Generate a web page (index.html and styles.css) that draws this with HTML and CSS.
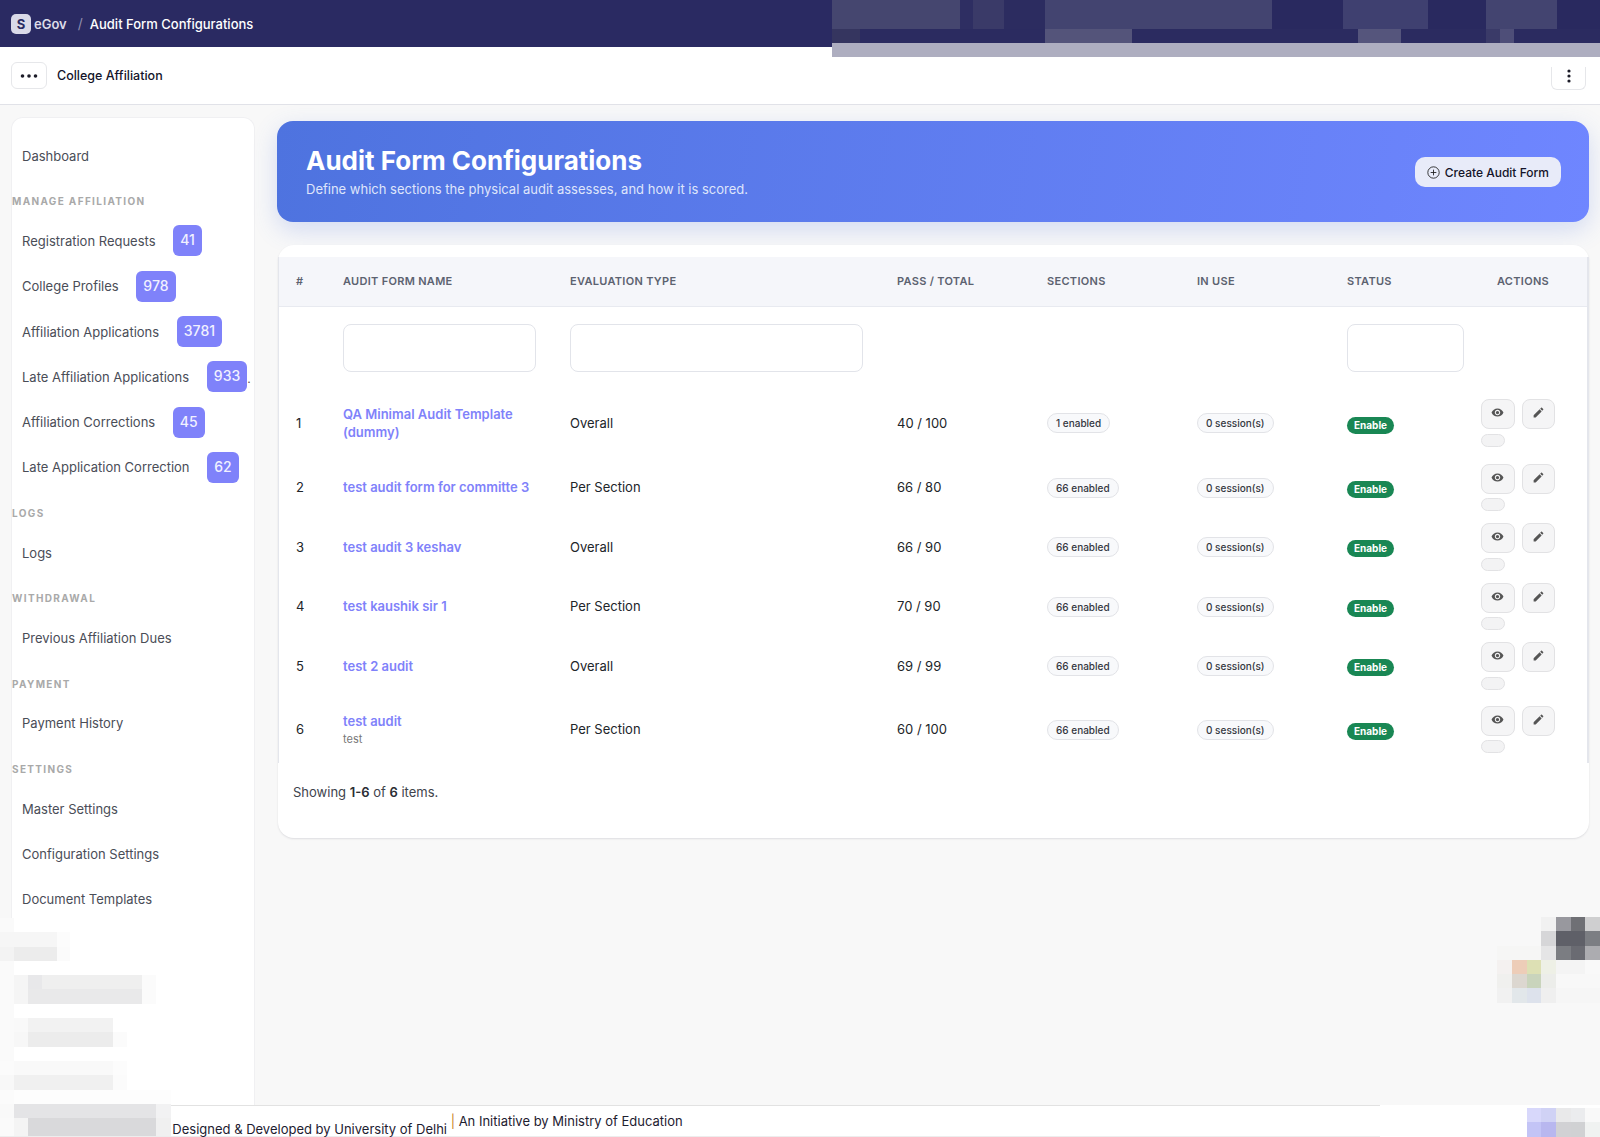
FILE: index.html
```html
<!doctype html>
<html lang="en">

<head>
<title>Audit Form Configurations</title>
<link rel="stylesheet" href="styles.css">
</head>

<body>

<svg class="icon-defs" width="0" height="0">
  <symbol id="icon-eye" viewBox="0 0 24 24"><path d="M12 4.5C7 4.5 2.73 7.61 1 12c1.73 4.39 6 7.5 11 7.5s9.27-3.11 11-7.5c-1.73-4.39-6-7.5-11-7.5zM12 17c-2.76 0-5-2.24-5-5s2.24-5 5-5 5 2.24 5 5-2.24 5-5 5zm0-8c-1.66 0-3 1.34-3 3s1.34 3 3 3 3-1.34 3-3-1.34-3-3-3z"/></symbol>
  <symbol id="icon-pencil" viewBox="0 0 24 24"><path d="M3 17.25V21h3.75L17.81 9.94l-3.75-3.75L3 17.25zM20.71 7.04c.39-.39.39-1.02 0-1.41l-2.34-2.34c-.39-.39-1.02-.39-1.41 0l-1.83 1.83 3.75 3.75 1.83-1.83z"/></symbol>
</svg>

<header class="topbar">
  <span class="logo">S</span>
  <span class="brand">eGov</span>
  <span class="crumb-sep">/</span>
  <span class="crumb">Audit Form Configurations</span>
</header>

<div class="subbar">
  <button class="dots-btn">
    <svg width="18" height="4" viewBox="0 0 18 4"><circle cx="2.5" cy="2" r="1.8"/><circle cx="9" cy="2" r="1.8"/><circle cx="15.5" cy="2" r="1.8"/></svg>
  </button>
  <span class="module-name">College Affiliation</span>
  <button class="kebab-btn">
    <svg width="4" height="14" viewBox="0 0 4 14"><circle cx="2" cy="2" r="1.6"/><circle cx="2" cy="7" r="1.6"/><circle cx="2" cy="12" r="1.6"/></svg>
  </button>
</div>

<div class="layout">
  <nav class="sidebar">
    <a class="nav-item">Dashboard</a>

    <div class="nav-label">MANAGE AFFILIATION</div>
    <a class="nav-item">Registration Requests <span class="nav-badge">41</span></a>
    <a class="nav-item">College Profiles <span class="nav-badge">978</span></a>
    <a class="nav-item">Affiliation Applications <span class="nav-badge">3781</span></a>
    <a class="nav-item">Late Affiliation Applications <span class="nav-badge">933</span><span class="nav-more">.</span></a>
    <a class="nav-item">Affiliation Corrections <span class="nav-badge">45</span></a>
    <a class="nav-item">Late Application Correction <span class="nav-badge">62</span></a>

    <div class="nav-label">LOGS</div>
    <a class="nav-item">Logs</a>

    <div class="nav-label">WITHDRAWAL</div>
    <a class="nav-item">Previous Affiliation Dues</a>

    <div class="nav-label">PAYMENT</div>
    <a class="nav-item">Payment History</a>

    <div class="nav-label">SETTINGS</div>
    <a class="nav-item">Master Settings</a>
    <a class="nav-item">Configuration Settings</a>
    <a class="nav-item">Document Templates</a>
  </nav>

  <main class="content">
    <section class="hero">
      <div>
        <h1>Audit Form Configurations</h1>
        <p>Define which sections the physical audit assesses, and how it is scored.</p>
      </div>
      <button class="create-btn">
        <svg width="13" height="13" viewBox="0 0 16 16" fill="none" stroke="#222" stroke-width="1.1"><circle cx="8" cy="8" r="7"/><path d="M8 4.5v7M4.5 8h7"/></svg>
        Create Audit Form
      </button>
    </section>

    <section class="card">
      <div class="table-wrap">
        <table class="forms">
          <colgroup>
            <col class="col-num"><col class="col-name"><col class="col-type">
            <col class="col-std"><col class="col-std"><col class="col-std">
            <col class="col-status"><col class="col-actions">
          </colgroup>
          <thead>
            <tr>
              <th>#</th>
              <th>Audit Form Name</th>
              <th>Evaluation Type</th>
              <th>Pass / Total</th>
              <th>Sections</th>
              <th>In Use</th>
              <th>Status</th>
              <th class="th-actions">Actions</th>
            </tr>
            <tr class="filters">
              <td></td>
              <td><input type="text"></td>
              <td><input type="text"></td>
              <td></td>
              <td></td>
              <td></td>
              <td class="filter-status"><input type="text"></td>
              <td></td>
            </tr>
          </thead>
          <tbody>
            <tr>
              <td>1</td>
              <td><a class="form-link">QA Minimal Audit Template (dummy)</a></td>
              <td>Overall</td>
              <td>40 / 100</td>
              <td><span class="pill">1 enabled</span></td>
              <td><span class="pill">0 session(s)</span></td>
              <td><span class="status">Enable</span></td>
              <td class="actions">
                <button class="act-btn"><svg><use href="#icon-eye"/></svg></button><button class="act-btn"><svg><use href="#icon-pencil"/></svg></button>
                <button class="act-toggle"></button>
              </td>
            </tr>
            <tr>
              <td>2</td>
              <td><a class="form-link">test audit form for committe 3</a></td>
              <td>Per Section</td>
              <td>66 / 80</td>
              <td><span class="pill">66 enabled</span></td>
              <td><span class="pill">0 session(s)</span></td>
              <td><span class="status">Enable</span></td>
              <td class="actions">
                <button class="act-btn"><svg><use href="#icon-eye"/></svg></button><button class="act-btn"><svg><use href="#icon-pencil"/></svg></button>
                <button class="act-toggle"></button>
              </td>
            </tr>
            <tr>
              <td>3</td>
              <td><a class="form-link">test audit 3 keshav</a></td>
              <td>Overall</td>
              <td>66 / 90</td>
              <td><span class="pill">66 enabled</span></td>
              <td><span class="pill">0 session(s)</span></td>
              <td><span class="status">Enable</span></td>
              <td class="actions">
                <button class="act-btn"><svg><use href="#icon-eye"/></svg></button><button class="act-btn"><svg><use href="#icon-pencil"/></svg></button>
                <button class="act-toggle"></button>
              </td>
            </tr>
            <tr>
              <td>4</td>
              <td><a class="form-link">test kaushik sir 1</a></td>
              <td>Per Section</td>
              <td>70 / 90</td>
              <td><span class="pill">66 enabled</span></td>
              <td><span class="pill">0 session(s)</span></td>
              <td><span class="status">Enable</span></td>
              <td class="actions">
                <button class="act-btn"><svg><use href="#icon-eye"/></svg></button><button class="act-btn"><svg><use href="#icon-pencil"/></svg></button>
                <button class="act-toggle"></button>
              </td>
            </tr>
            <tr>
              <td>5</td>
              <td><a class="form-link">test 2 audit</a></td>
              <td>Overall</td>
              <td>69 / 99</td>
              <td><span class="pill">66 enabled</span></td>
              <td><span class="pill">0 session(s)</span></td>
              <td><span class="status">Enable</span></td>
              <td class="actions">
                <button class="act-btn"><svg><use href="#icon-eye"/></svg></button><button class="act-btn"><svg><use href="#icon-pencil"/></svg></button>
                <button class="act-toggle"></button>
              </td>
            </tr>
            <tr>
              <td>6</td>
              <td><a class="form-link">test audit</a><div class="form-note">test</div></td>
              <td>Per Section</td>
              <td>60 / 100</td>
              <td><span class="pill">66 enabled</span></td>
              <td><span class="pill">0 session(s)</span></td>
              <td><span class="status">Enable</span></td>
              <td class="actions">
                <button class="act-btn"><svg><use href="#icon-eye"/></svg></button><button class="act-btn"><svg><use href="#icon-pencil"/></svg></button>
                <button class="act-toggle"></button>
              </td>
            </tr>
          </tbody>
        </table>
      </div>
      <div class="summary">Showing <b>1-6</b> of <b>6</b> items.</div>
    </section>
  </main>
</div>

<footer class="footer">
  Designed &amp; Developed by University of Delhi <span class="footer-sep">|</span> An Initiative by Ministry of Education
</footer>

<!-- pixelated patches lying over the page -->
<div class="patch patch-top">
  <div class="pr top-a"></div>
  <div class="pr top-a"></div>
  <div class="pr top-b"></div>
  <div class="pr top-c"></div>
</div>

<div class="patch patch-side">
  <div class="pr side-gap"></div>
  <div class="pr side-a"></div>
  <div class="pr side-b"></div>
  <div class="pr side-gap"></div>
  <div class="pr side-c"></div>
  <div class="pr side-d"></div>
  <div class="pr side-gap"></div>
  <div class="pr side-e"></div>
  <div class="pr side-f"></div>
  <div class="pr side-gap"></div>
  <div class="pr side-g"></div>
  <div class="pr side-h"></div>
  <div class="pr side-i"></div>
  <div class="pr side-j"></div>
  <div class="pr side-k"></div>
</div>

<div class="patch patch-float">
  <div class="pr float-a"></div>
  <div class="pr float-b"></div>
  <div class="pr float-c"></div>
  <div class="pr float-d"></div>
  <div class="pr float-e"></div>
  <div class="pr float-f"></div>
</div>

<div class="patch patch-corner">
  <div class="pr corner-a"></div>
  <div class="pr corner-b"></div>
</div>

</body>
</html>
```

FILE: styles.css
```css
* {
  box-sizing: border-box;
}

html, body {
  height: 1137px;
  overflow: hidden;
}

body {
  position: relative;
  display: flex;
  flex-direction: column;
  margin: 0;
  background-color: #f8f8f8;
  font-family: Inter, "Liberation Sans", sans-serif;
  font-size: 13px;
  color: #212529;
}

button {
  font: inherit;
  cursor: pointer;
}

.icon-defs {
  position: absolute;
}

/* top bar */
.topbar {
  display: flex;
  align-items: center;
  flex: none;
  height: 47px;
  padding-left: 11px;
  background-color: #2a2a62;
  color: #fff;
}

.logo {
  display: flex;
  align-items: center;
  justify-content: center;
  width: 20px;
  height: 20px;
  border-radius: 5px;
  background-color: #d9d9e8;
  color: #2a2a62;
  font-size: 13px;
  font-weight: 700;
}

.brand {
  margin-left: 3px;
  font-size: 13px;
  font-weight: 600;
  color: #dcdce8;
}

.crumb-sep {
  margin-left: 11px;
  color: #8f8fae;
  font-size: 14px;
}

.crumb {
  margin-left: 7px;
  font-size: 13px;
  font-weight: 500;
}

/* second bar */
.subbar {
  display: flex;
  align-items: center;
  flex: none;
  height: 58px;
  padding: 0 14px 0 11px;
  background-color: #fff;
  border-bottom: 1px solid #e1e2e8;
}

.dots-btn {
  display: flex;
  align-items: center;
  justify-content: center;
  width: 36px;
  height: 27px;
  padding: 0;
  background-color: #fff;
  border: 1px solid #e6e7ea;
  border-radius: 6px;
}

.dots-btn svg, .kebab-btn svg {
  fill: #1c1c28;
}

.module-name {
  margin-left: 10px;
  font-size: 12.5px;
  font-weight: 500;
  color: #14142a;
}

.kebab-btn {
  display: flex;
  justify-content: center;
  align-self: flex-end;
  width: 35px;
  height: 23px;
  margin-left: auto;
  margin-bottom: 14px;
  padding: 2px 0 0;
  background-color: #fff;
  border: 1px solid #e6e7ea;
  border-top: 0;
  border-radius: 0 0 6px 6px;
}

/* sidebar */
.layout {
  display: flex;
  flex: none;
  height: 1000px;
}

.sidebar {
  flex: none;
  width: 244px;
  margin: 12px 0 0 11px;
  padding-top: 15px;
  background-color: #fff;
  border: 1px solid #f0f0f2;
  border-bottom: 0;
  border-radius: 12px 12px 0 0;
}

.nav-item {
  display: flex;
  align-items: center;
  height: 45.3px;
  padding-left: 10px;
  font-size: 13px;
  color: #4a4d57;
  white-space: pre;
}

.nav-badge {
  height: 31px;
  margin-left: 14px;
  padding: 0 7px;
  border-radius: 6px;
  background-color: #7f82fa;
  color: #f1f1ff;
  font-size: 14px;
  font-weight: 500;
  line-height: 30px;
}

.nav-more {
  align-self: center;
  margin-top: 4px;
  font-size: 12px;
  color: #555;
}

.nav-label {
  height: 40px;
  padding-top: 15px;
  font-size: 10px;
  font-weight: 700;
  line-height: 16px;
  letter-spacing: 1.35px;
  color: #a9a9a9;
}

/* main column */
.content {
  flex: 1;
  min-width: 0;
  padding: 16px 11px 0 23px;
}

.hero {
  display: flex;
  align-items: center;
  justify-content: space-between;
  height: 101px;
  margin-left: -1px;
  padding: 0 28px 0 29px;
  border-radius: 16px;
  background: linear-gradient(100deg, #4e73df 0%, #6f86ff 100%);
  box-shadow: 0 8px 24px rgba(78, 115, 223, 0.22);
  color: #fff;
}

.hero h1 {
  margin: 0;
  font-size: 26px;
  font-weight: 700;
  line-height: 32px;
}

.hero p {
  margin: 3px 0 0;
  font-size: 13px;
  line-height: 18px;
  color: #dfe5fb;
}

.create-btn {
  display: flex;
  align-items: center;
  gap: 5px;
  height: 30px;
  margin-top: 1px;
  padding: 0 12px;
  border: 0;
  border-radius: 10px;
  background-color: #e8ebf9;
  color: #14142a;
  font-size: 12px;
  font-weight: 500;
}

.card {
  height: 593px;
  margin-top: 23px;
  padding-top: 12px;
  background-color: #fff;
  border-radius: 16px;
  box-shadow: 0 1px 2px rgba(30, 30, 60, 0.12);
}

.table-wrap {
  border-left: 1px solid #e4e6ec;
  border-right: 2px solid #e4e6ec;
}

/* table */
.forms {
  width: 100%;
  table-layout: fixed;
  border-collapse: collapse;
}

.col-num { width: 47px; }
.col-name { width: 227px; }
.col-type { width: 327px; }
.col-std { width: 150px; }
.col-status { width: 134px; }

.forms th {
  height: 49px;
  padding: 0 17px;
  background-color: #f5f6fa;
  border-bottom: 1px solid #e8eaf0;
  font-size: 11px;
  font-weight: 600;
  letter-spacing: 0.3px;
  text-align: left;
  text-transform: uppercase;
  color: #5c6270;
}

.forms .th-actions {
  padding-right: 38px;
  text-align: right;
}

.forms td {
  padding: 16px 17px;
  line-height: 18.6px;
  vertical-align: middle;
}

.forms .filters td {
  padding: 17px 17px;
}

.forms .filters .filter-status {
  padding-right: 0;
}

.filters input {
  display: block;
  width: 100%;
  height: 48px;
  background-color: #fff;
  border: 1px solid #e2e4ea;
  border-radius: 8px;
}

.form-link {
  font-weight: 600;
  color: #7f82fa;
}

.form-note {
  font-size: 11px;
  line-height: 15px;
  margin-top: 2px;
  color: #777;
}

.pill {
  display: inline-block;
  height: 20px;
  padding: 0 8px;
  border: 1px solid #e2e3e7;
  border-radius: 10px;
  background-color: #f8f9fb;
  font-size: 10px;
  font-weight: 500;
  line-height: 18px;
  vertical-align: middle;
  color: #343741;
}

.status {
  display: inline-block;
  height: 17px;
  padding: 0 7px;
  border-radius: 9px;
  background-color: #198754;
  color: #fff;
  font-size: 10px;
  font-weight: 700;
  line-height: 17px;
  vertical-align: middle;
  position: relative;
  top: 1px;
}

.forms .actions {
  padding: 6px 17px;
  line-height: 0;
}

.act-btn {
  display: inline-flex;
  align-items: flex-start;
  justify-content: center;
  width: 33.5px;
  height: 30px;
  margin-right: 7px;
  padding: 6px 0 0;
  background-color: #f5f5f6;
  border: 1px solid #e2e2e4;
  border-radius: 8px;
}

.act-btn svg {
  width: 13px;
  height: 13px;
  fill: #555;
}

.act-toggle {
  display: block;
  width: 24px;
  height: 13px;
  margin-top: 4.5px;
  padding: 0;
  background-color: #f3f3f4;
  border: 1px solid #e2e2e4;
  border-radius: 7px;
}

.summary {
  padding: 20px 0 0 15px;
  line-height: 18px;
  color: #40434c;
}

.summary b {
  font-weight: 600;
  color: #2b2d34;
}

/* footer */
.footer {
  display: flex;
  align-items: center;
  flex: none;
  height: 32px;
  padding-left: 165px;
  background-color: #fff;
  border-top: 1px solid #e2e2e2;
  border-bottom: 1px solid #ededed;
  font-size: 13px;
  white-space: pre;
  color: #1d2030;
}

.footer-sep {
  color: #c9802a;
}

/* pixelated patches */
.patch {
  position: absolute;
}

.pr {
  height: 14.3px;
}

.patch-top {
  top: 0;
  left: 832px;
  width: 768px;
}

.top-a {
  background: linear-gradient(90deg, #45466f 0 128px, #2e2e62 128px 141px, #3a3a68 141px 172px, #2c2c60 172px 213px, #434470 213px 440px, #29295f 440px 511px, #3f4070 511px 596px, #29295f 596px 654px, #434470 654px 725px, #29295f 725px);
}

.top-b {
  background: linear-gradient(90deg, #35355f 0 28px, #2b2b60 28px 213px, #54547a 213px 300px, #2b2b60 300px 526px, #55557c 526px 569px, #2b2b60 569px 654px, #3a3a68 654px 668px, #4e4e78 668px 682px, #2b2b60 682px);
}

.top-c {
  background-color: #aeaec0;
}

.patch-side {
  top: 918px;
  left: 0;
  width: 171px;
}

.side-gap { background: linear-gradient(90deg, #fafafa 0 14px, transparent 14px); }
.side-a { background: linear-gradient(90deg, #f6f6f6 0 57px, #fcfcfc 57px 70px, transparent 70px); }
.side-b { background: linear-gradient(90deg, #f3f3f3 0 14px, #ececec 14px 57px, #fbfbfb 57px 70px, transparent 70px); }
.side-c { background: linear-gradient(90deg, #fafafa 0 14px, #f5f5f5 14px 28px, #e8e8ea 28px 42px, #efefef 42px 142px, #fbfbfb 142px 156px, transparent 156px); }
.side-d { background: linear-gradient(90deg, #fafafa 0 14px, #f5f5f5 14px 28px, #e9e9ea 28px 142px, #fbfbfb 142px 156px, transparent 156px); }
.side-e { background: linear-gradient(90deg, #fafafa 0 14px, #f9f9f9 14px 28px, #f2f2f2 28px 113px, transparent 113px); }
.side-f { background: linear-gradient(90deg, #fafafa 0 14px, #f7f7f7 14px 28px, #ececec 28px 113px, #fbfbfb 113px 127px, transparent 127px); }
.side-g { background: linear-gradient(90deg, #fbfbfb 0 14px, #f9f9f9 14px 113px, #fcfcfc 113px 127px, transparent 127px); }
.side-h { background: linear-gradient(90deg, #f8f8f8 0 14px, #f0f0f0 14px 113px, #fbfbfb 113px 127px, transparent 127px); }
.side-i { background: linear-gradient(90deg, #fbfbfb 0 14px, #fdfdfd 14px 171px); }
.side-j { background: linear-gradient(90deg, #f9f9f9 0 14px, #e4e4e6 14px 156px, #f2f2f3 156px 171px); }
.side-k { height: 18px; background: linear-gradient(90deg, #fafafa 0 14px, #f4f4f4 14px 28px, #d9d9db 28px 156px, #f0f0f0 156px 171px); }

.patch-float {
  top: 917px;
  left: 1497px;
  width: 103px;
}

.float-a { background: linear-gradient(90deg, transparent 0 44px, #f1f1f1 44px 59px, #98989e 59px 74px, #6f7075 74px 88px, #cfcfd0 88px); }
.float-b { background: linear-gradient(90deg, transparent 0 44px, #d6d6d8 44px 59px, #5f6068 59px 88px, #7c7e83 88px); }
.float-c { background: linear-gradient(90deg, #f6f6f5 0 44px, #e5e5e6 44px 59px, #7b7d82 59px 74px, #6a6b72 74px 88px, #acacb0 88px); }
.float-d { background: linear-gradient(90deg, #f4f1f0 0 15px, #edcdb8 15px 30px, #dde0b4 30px 44px, #eef0e6 44px 59px, #f4f4f4 59px 88px, #f9f9f9 88px); }
.float-e { background: linear-gradient(90deg, #f0f0ee 0 15px, #dcd7d0 15px 30px, #c9d4bc 30px 44px, #ecedea 44px 59px, transparent 59px); }
.float-f { background: linear-gradient(90deg, #f1f1f1 0 15px, #e2e7ea 15px 30px, #dde2ec 30px 44px, #efefef 44px 59px, #f6f6f6 59px); }

.patch-corner {
  top: 1105px;
  left: 1380px;
  width: 220px;
  height: 32px;
  padding-top: 3px;
  background-color: #fff;
}

.corner-a { background: linear-gradient(90deg, transparent 0 147px, #d8d8fb 147px 161px, #d0d2f5 161px 176px, #e9e9ea 176px 191px, #ebecee 191px 205px, #f9f9f9 205px); }
.corner-b { height: 15px; background: linear-gradient(90deg, transparent 0 147px, #c3c4f6 147px 161px, #b8b7ef 161px 176px, #d1d1d4 176px 191px, #d0d1d3 191px 205px, #f0f2f1 205px); }
```
